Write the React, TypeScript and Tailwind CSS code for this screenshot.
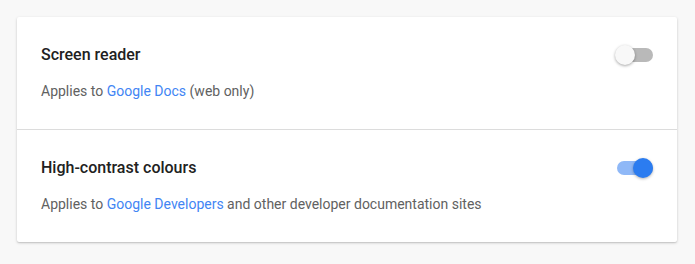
const settings = [
  {
    title: 'Screen reader',
    link: 'Google Docs',
    rest: ' (web only)',
    on: false,
  },
  {
    title: 'High-contrast colours',
    link: 'Google Developers',
    rest: ' and other developer documentation sites',
    on: true,
  },
];

const Toggle = ({ on }: { on: boolean }) => (
  <div className="relative h-5 w-[38px] shrink-0">
    <div
      className={
        on
          ? 'absolute top-[3px] right-0 left-[2px] h-[14px] rounded-full bg-[#8fb8f7]'
          : 'absolute top-[3px] right-0 left-[2px] h-[14px] rounded-full bg-[#b9b9b9]'
      }
    />
    <div
      className={
        on
          ? 'absolute top-0 right-0 h-5 w-5 rounded-full bg-[#2b7cf0] shadow-[0_1px_3px_rgba(0,0,0,0.3)]'
          : 'absolute top-0 left-0 h-5 w-5 rounded-full bg-[#f8f8f8] shadow-[0_1px_3px_rgba(0,0,0,0.35)]'
      }
    />
  </div>
);

export default function App() {
  return (
    <div className="min-h-[264px] bg-[#f8f8f8] p-[17px] font-['Roboto',sans-serif]">
      <div className="w-[660px] rounded-[2px] bg-white shadow-[0_1px_3px_rgba(0,0,0,0.18),0_1px_1px_rgba(0,0,0,0.08)]">
        {settings.map((s, i) => (
          <div
            key={s.title}
            className={i > 0 ? 'border-t border-[#dcdcdc] px-6 pt-6 pb-7' : 'px-6 pt-6 pb-7'}
          >
            <div className="flex items-center justify-between">
              <div className="text-base leading-7 font-medium text-[#212121]">{s.title}</div>
              <Toggle on={s.on} />
            </div>
            <div className="mt-3 text-sm leading-5 text-[#616161]">
              Applies to <span className="text-[#4285f4]">{s.link}</span>
              {s.rest}
            </div>
          </div>
        ))}
      </div>
    </div>
  );
}
